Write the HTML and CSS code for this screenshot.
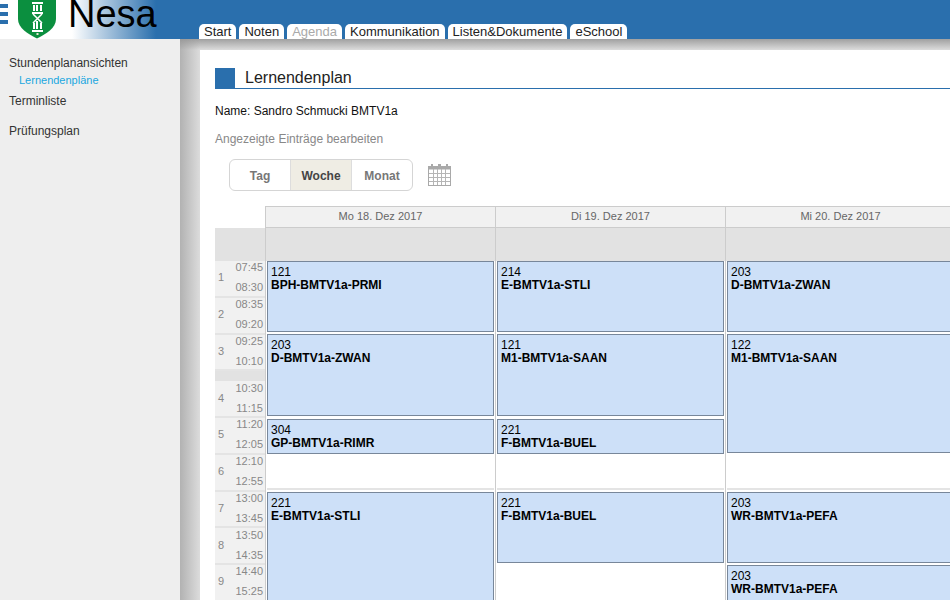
FILE: index.html
```html
<!DOCTYPE html>
<html lang="de">
<head>
<meta charset="utf-8">
<title>Lernendenplan</title>
<link rel="stylesheet" href="styles.css">
</head>
<body>
<header class="topbar">
  <div class="brand">
    <div class="burger"><i></i><i></i><i></i></div>
    <svg class="shield" width="38" height="39" viewBox="0 0 38 39">
      <path d="M0 -4H38V19C38 28 28 34 19 38.500C10 34 0 28 0 19Z" fill="#0b8f3f"/>
      <path d="M14 2H25V4H14ZM14 12H25V14H14ZM14 30H25V32H14ZM15 5H17V11H15ZM18 5H20V11H18ZM22 5H24V11H22ZM15 23H17V29H15ZM18 21H20V29H18ZM22 23H24V29H22Z" fill="#fff"/>
      <path d="M15 14L24 23M24 14L15 23" stroke="#fff" stroke-width="1.500" fill="none"/>
      <path d="M18.500 33H20.500V35H18.500Z" fill="#e8e8d0"/>
    </svg>
    <span class="logo-text">Nesa</span>
  </div>
  <nav class="tabs">
    <a class="tab">Start</a>
    <a class="tab">Noten</a>
    <a class="tab tab-off">Agenda</a>
    <a class="tab">Kommunikation</a>
    <a class="tab">Listen&amp;Dokumente</a>
    <a class="tab">eSchool</a>
  </nav>
</header>
<div class="main">
  <aside class="sidebar">
    <a class="side-link">Stundenplanansichten</a>
    <a class="side-sub">Lernendenpläne</a>
    <a class="side-link side-term">Terminliste</a>
    <a class="side-link side-pruef">Prüfungsplan</a>
  </aside>
  <section class="content">
    <div class="panel">
      <div class="title-row"><span class="title-box"></span><h1>Lernendenplan</h1></div>
      <p class="name">Name: Sandro Schmucki BMTV1a</p>
      <p class="edit">Angezeigte Einträge bearbeiten</p>
      <div class="toolbar">
        <div class="seg">
          <span class="seg-btn">Tag</span>
          <span class="seg-btn seg-on">Woche</span>
          <span class="seg-btn">Monat</span>
        </div>
        <svg class="cal-icon" width="23" height="22" viewBox="0 0 23 22">
          <path d="M0 2H3V0H5V2H10V0H13V2H18V0H20V2H23V22H0Z" fill="#a9a9a9"/>
          <path d="M1 5.500H22V21H1Z" fill="#fff"/>
          <path d="M5.500 5V21M9.500 5V21M13.500 5V21M17.500 5V21M1 9.500H22M1 13.500H22M1 17.500H22" stroke="#b5b5b5" fill="none"/>
        </svg>
        <span class="range">18. - 22. Dez 2017</span>
      </div>
      <div class="cal">
        <div class="cal-head">
          <div class="corner"></div>
          <div class="day-head">Mo 18. Dez 2017</div>
          <div class="day-head">Di 19. Dez 2017</div>
          <div class="day-head">Mi 20. Dez 2017</div>
        </div>
        <div class="cal-allday">
          <div class="allday-side"></div>
          <div class="allday-cell"></div>
          <div class="allday-cell"></div>
          <div class="allday-cell"></div>
        </div>
        <div class="cal-body">
          <div class="periods">
            <div class="period"><b>1</b><span><i>07:45</i><i>08:30</i></span></div>
            <div class="period"><b>2</b><span><i>08:35</i><i>09:20</i></span></div>
            <div class="period"><b>3</b><span><i>09:25</i><i>10:10</i></span></div>
            <div class="pause"></div>
            <div class="period"><b>4</b><span><i>10:30</i><i>11:15</i></span></div>
            <div class="period"><b>5</b><span><i>11:20</i><i>12:05</i></span></div>
            <div class="period"><b>6</b><span><i>12:10</i><i>12:55</i></span></div>
            <div class="period"><b>7</b><span><i>13:00</i><i>13:45</i></span></div>
            <div class="period"><b>8</b><span><i>13:50</i><i>14:35</i></span></div>
            <div class="period"><b>9</b><span><i>14:40</i><i>15:25</i></span></div>
          </div>
          <div class="day">
            <div class="ev ev-2p"><span>121</span><b>BPH-BMTV1a-PRMI</b></div>
            <div class="ev ev-2pb"><span>203</span><b>D-BMTV1a-ZWAN</b></div>
            <div class="ev ev-1p"><span>304</span><b>GP-BMTV1a-RIMR</b></div>
            <div class="gap gap-lunch"></div>
            <div class="ev ev-3p"><span>221</span><b>E-BMTV1a-STLI</b></div>
          </div>
          <div class="day">
            <div class="ev ev-2p"><span>214</span><b>E-BMTV1a-STLI</b></div>
            <div class="ev ev-2pb"><span>121</span><b>M1-BMTV1a-SAAN</b></div>
            <div class="ev ev-1p"><span>221</span><b>F-BMTV1a-BUEL</b></div>
            <div class="gap gap-lunch"></div>
            <div class="ev ev-2p"><span>221</span><b>F-BMTV1a-BUEL</b></div>
          </div>
          <div class="day">
            <div class="ev ev-2p"><span>203</span><b>D-BMTV1a-ZWAN</b></div>
            <div class="ev ev-3pb"><span>122</span><b>M1-BMTV1a-SAAN</b></div>
            <div class="gap gap-lunch2"></div>
            <div class="ev ev-2p"><span>203</span><b>WR-BMTV1a-PEFA</b></div>
            <div class="ev ev-1p-last"><span>203</span><b>WR-BMTV1a-PEFA</b></div>
          </div>
        </div>
      </div>
    </div>
  </section>
</div>
</body>
</html>
```

FILE: styles.css
```css
* { box-sizing: border-box; }
html, body { margin: 0; height: 100%; overflow: hidden; }
body { font-family: "Liberation Sans", Arial, sans-serif; font-size: 12px; color: #000; background: #eee; width: 950px; height: 600px; }

.topbar { height: 39px; background: #2a6fad; display: flex; align-items: flex-end; }
.brand { width: 199px; height: 39px; display: flex; align-items: flex-start; background: linear-gradient(90deg, #fff 0, #fff 72px, #2a6fad 156px); }
.burger { width: 18px; display: flex; flex-direction: column; gap: 4px; padding-top: 4px; }
.burger i { display: block; width: 8px; height: 4px; background: #2a6fad; }
.shield { display: block; flex: none; }
.logo-text { font-size: 38px; line-height: 28px; margin-left: 12px; color: #000; }

.tabs { display: flex; gap: 3px; }
.tab { height: 15px; padding: 0 5px; background: #fff; border-radius: 5px 5px 0 0; font-size: 13px; line-height: 15px; color: #222; }
.tab-off { color: #aaa; }

.main { display: flex; height: 561px; }
.sidebar { width: 180px; flex: none; background: #eee; padding: 17px 0 0 9px; display: flex; flex-direction: column; }
.side-link { font-size: 12px; line-height: 15px; color: #333; }
.side-sub { font-size: 11px; line-height: 13px; margin: 3px 0 0 10px; color: #1aa7e0; }
.side-term { margin-top: 7px; }
.side-pruef { margin-top: 15px; }

.content { flex: 1; min-width: 0; padding: 11px 0 0 20px; overflow: hidden; background: linear-gradient(180deg, #a0a0a0 0, #dcdcdc 11px, #dcdcdc 100%); position: relative; }
.content::before { content: ""; position: absolute; left: 0; top: 0; bottom: 0; width: 20px; background: linear-gradient(90deg, rgba(150,150,150,.6), rgba(220,220,220,0)); }
.panel { width: 1000px; height: 600px; background: #fff; padding: 18px 0 0 15px; position: relative; }

.title-row { display: flex; height: 21px; border-bottom: 1px solid #2a6fad; width: 800px; }
.title-box { width: 20px; height: 20px; background: #2a6fad; }
.title-row h1 { margin: 0 0 0 10px; font-size: 16px; font-weight: normal; line-height: 20px; color: #222; }
.name { margin: 15px 0 0; font-size: 12px; line-height: 15px; color: #111; }
.edit { margin: 13px 0 0; font-size: 12px; line-height: 15px; color: #888; }

.toolbar { display: flex; align-items: center; margin: 11px 0 0 14px; height: 33px; position: relative; }
.seg { display: flex; width: 184px; height: 32px; border: 1px solid #d5d5d5; border-radius: 6px; overflow: hidden; }
.seg-btn { flex: 1; text-align: center; font-size: 12px; font-weight: bold; line-height: 32px; color: #777; }
.seg-on { background: #efede4; color: #444; border-left: 1px solid #ddd; border-right: 1px solid #ddd; }
.cal-icon { margin-left: 15px; display: block; }
.range { margin-left: 500px; font-size: 16px; line-height: 20px; padding-top: 2px; color: #555; white-space: nowrap; }

.cal { margin-top: 15px; }
.cal-head { display: flex; height: 22px; }
.corner { width: 50px; flex: none; }
.day-head { width: 230px; flex: none; background: #f1f1f1; border-top: 1px solid #ccc; border-left: 1px solid #ccc; border-bottom: 1px solid #ccc; font-size: 11px; line-height: 19px; text-align: center; color: #666; }
.cal-allday { display: flex; height: 33px; background: #e2e2e2; }
.allday-side { width: 50px; flex: none; }
.allday-cell { width: 230px; flex: none; border-left: 1px solid #ccc; }

.cal-body { display: flex; }
.periods { width: 50px; flex: none; background: #f1f1f1; overflow: hidden; }
.period { height: 36.750px; display: flex; align-items: center; padding-bottom: 2px; border-bottom: 2px solid #e4e4e4; color: #888; }
.period b { width: 21px; padding-left: 3px; font-weight: normal; font-size: 11px; }
.period span { flex: 1; display: flex; flex-direction: column; align-items: flex-end; padding-right: 2px; gap: 6px; }
.period i { font-style: normal; font-size: 11px; line-height: 14px; }
.pause { height: 10px; background: #e2e2e2; }
.day { width: 230px; flex: none; padding: 0 1px; border-left: 1px solid #ccc; display: flex; flex-direction: column; gap: 2px; background: #fff; }
.ev { flex: none; background: #cde0f8; border: 1px solid #78879a; padding: 4px 3px 0; font-size: 12px; line-height: 13px; color: #000; display: flex; flex-direction: column; overflow: hidden; }
.ev-1p { height: 35px; margin-top: 1px; }
.ev-1p-last { height: 36px; }
.ev-2p { height: 71px; }
.ev-2pb { height: 82px; }
.ev-3pb { height: 119px; }
.ev-3p { height: 120px; }
.gap-lunch { height: 34px; border-bottom: 2px solid #e4e4e4; }
.gap-lunch2 { height: 35px; border-bottom: 2px solid #e4e4e4; }
```
